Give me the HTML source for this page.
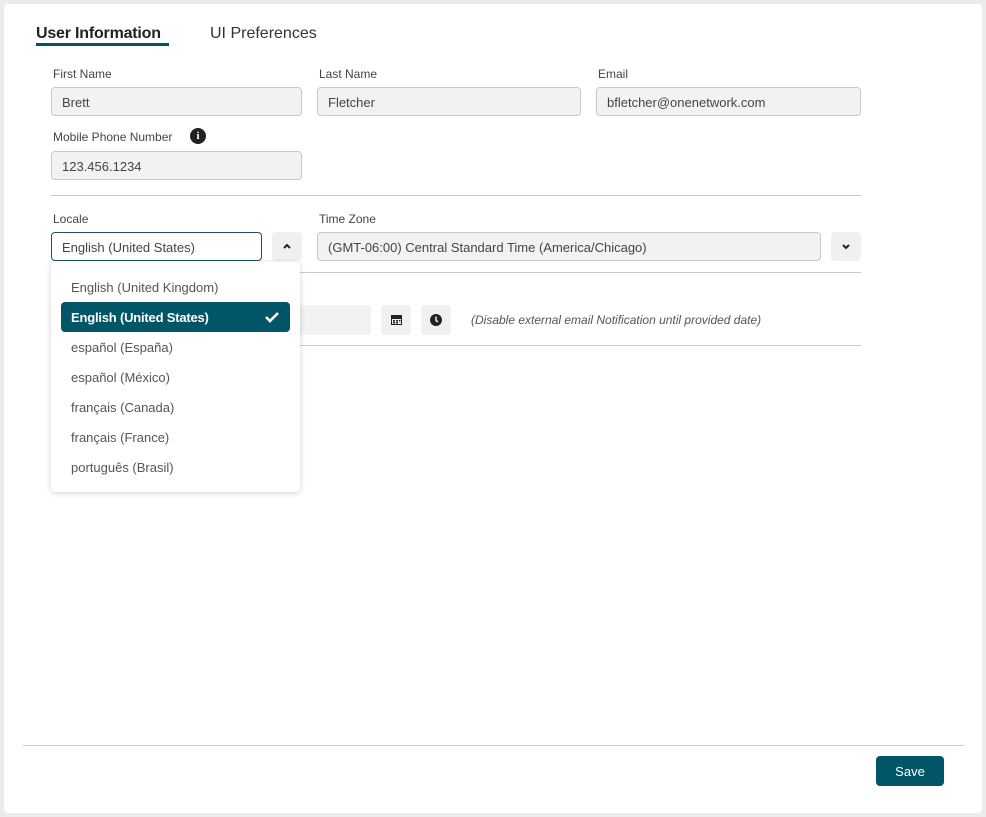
<!DOCTYPE html>
<html><head><style>
*{box-sizing:border-box}
body{margin:0;width:986px;height:817px;background:#ebebeb;font-family:"Liberation Sans",sans-serif;position:relative;overflow:hidden;color:#333}
.card{position:absolute;left:4px;top:4px;width:978px;height:809px;background:#fff;border-radius:4px}
.a{position:absolute}
.lbl{font-size:12px;color:#444}
.inp{position:absolute;height:29px;background:#f2f2f2;border:1px solid #c8c8c8;border-radius:4px;font-size:13px;color:#444;padding:7px 10px 5px;white-space:nowrap}
.btn{position:absolute;width:30px;height:29px;background:#f0f0f0;border-radius:4px}
.hr{position:absolute;height:1px;background:#c8c8c8}
.opt{position:absolute;left:71px;font-size:13px;color:#555}
</style></head><body>
<div class="card"></div>
<div class="a" style="left:36px;top:25px;font-size:16px;font-weight:bold;color:#222;letter-spacing:-0.2px">User Information</div>
<div class="a" style="left:36px;top:43px;width:133px;height:3px;background:#005566"></div>
<div class="a" style="left:210px;top:25px;font-size:16px;color:#333">UI Preferences</div>

<div class="a lbl" style="left:53px;top:67px">First Name</div>
<div class="a lbl" style="left:319px;top:67px">Last Name</div>
<div class="a lbl" style="left:598px;top:67px">Email</div>
<div class="inp" style="left:51px;top:87px;width:251px">Brett</div>
<div class="inp" style="left:317px;top:87px;width:264px">Fletcher</div>
<div class="inp" style="left:596px;top:87px;width:265px">bfletcher@onenetwork.com</div>
<div class="a lbl" style="left:53px;top:130px">Mobile Phone Number</div>
<div class="a" style="left:190px;top:128px;width:16px;height:16px;border-radius:50%;background:#222;color:#fff;font-size:11px;font-weight:bold;text-align:center;line-height:16px;font-family:'Liberation Serif',serif">i</div>
<div class="inp" style="left:51px;top:151px;width:251px">123.456.1234</div>
<div class="hr" style="left:51px;top:195px;width:810px"></div>

<div class="a lbl" style="left:53px;top:212px">Locale</div>
<div class="a lbl" style="left:319px;top:212px">Time Zone</div>
<div class="inp" style="left:51px;top:232px;width:211px;background:#fff;border-color:#1d5160">English (United States)</div>
<div class="btn" style="left:272px;top:232px"><svg width="30" height="29"><path d="M12 16l3-3 3 3" stroke="#222" stroke-width="2" fill="none"/></svg></div>
<div class="inp" style="left:317px;top:232px;width:504px">(GMT-06:00) Central Standard Time (America/Chicago)</div>
<div class="btn" style="left:831px;top:232px"><svg width="30" height="29"><path d="M12 13l3 3 3-3" stroke="#222" stroke-width="2" fill="none"/></svg></div>
<div class="hr" style="left:51px;top:272px;width:810px"></div>

<div class="a" style="left:290px;top:305px;width:81px;height:30px;background:#f2f2f2;border-radius:4px"></div>
<div class="btn" style="left:381px;top:305px;height:30px"><svg width="30" height="30"><rect x="10" y="10" width="11" height="10" fill="#222"/><rect x="11" y="14" width="9" height="5" fill="#f0f0f0"/><rect x="12" y="15" width="2" height="1.5" fill="#222"/><rect x="15" y="15" width="2" height="1.5" fill="#222"/><rect x="18" y="15" width="1.5" height="1.5" fill="#222"/><rect x="12" y="17" width="2" height="1.5" fill="#222"/><rect x="15" y="17" width="2" height="1.5" fill="#222"/></svg></div>
<div class="btn" style="left:421px;top:305px;height:30px"><svg width="30" height="30"><circle cx="15" cy="15" r="6" fill="#222"/><path d="M15 11.5v4l2 1.5" stroke="#f0f0f0" stroke-width="1.5" fill="none"/></svg></div>
<div class="a" style="left:471px;top:313px;font-size:12px;font-style:italic;color:#555">(Disable external email Notification until provided date)</div>
<div class="hr" style="left:290px;top:345px;width:571px"></div>

<div class="a" style="left:51px;top:262px;width:249px;height:230px;background:#fff;border-radius:4px;box-shadow:0 1px 6px rgba(0,0,0,.18)"></div>
<div class="opt" style="top:280px">English (United Kingdom)</div>
<div class="a" style="left:61px;top:302px;width:229px;height:30px;background:#005566;border-radius:4px"></div>
<div class="opt" style="top:310px;color:#fff;font-weight:bold;font-size:13px;letter-spacing:-0.2px">English (United States)</div>
<svg class="a" style="left:263px;top:309px" width="18" height="16"><path d="M3 8l4 4 8-8" stroke="#fff" stroke-width="2.6" fill="none"/></svg>
<div class="opt" style="top:340px">español (España)</div>
<div class="opt" style="top:370px">español (México)</div>
<div class="opt" style="top:400px">français (Canada)</div>
<div class="opt" style="top:430px">français (France)</div>
<div class="opt" style="top:460px">português (Brasil)</div>

<div class="hr" style="left:23px;top:745px;width:941px"></div>
<div class="a" style="left:876px;top:756px;width:68px;height:30px;background:#005566;border-radius:4px;color:#fff;font-size:13px;text-align:center;line-height:31px">Save</div>
</body></html>
